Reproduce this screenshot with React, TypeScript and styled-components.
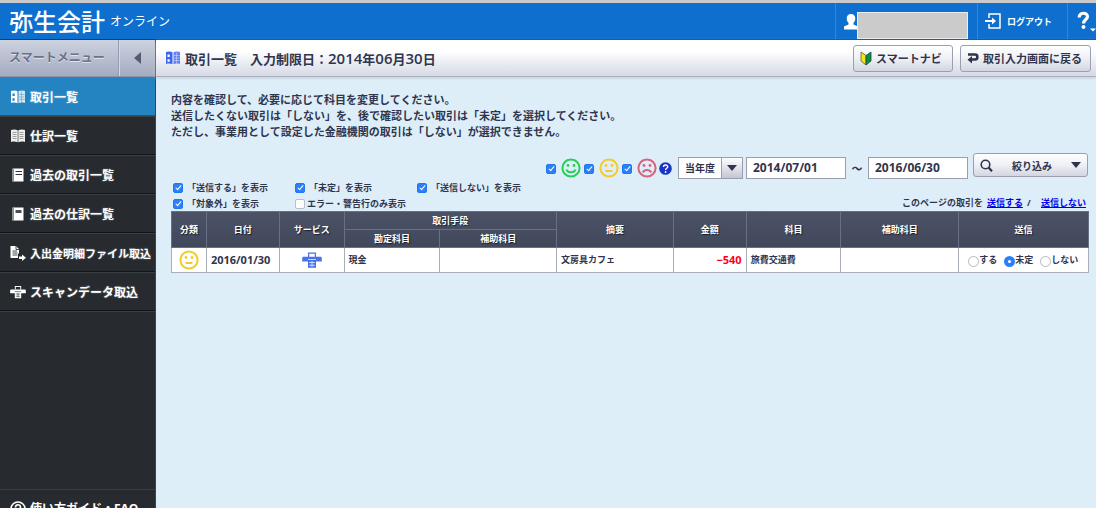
import React from "react";
import styled, { createGlobalStyle, css } from "styled-components";

const GlobalStyle = createGlobalStyle`
  *, *::before, *::after { box-sizing: border-box; }
  body {
    margin: 0;
    background: #deeef9;
    color: #30354d;
    font-family: "Open Sans", "Noto Sans CJK JP", sans-serif;
    font-weight: 700;
    font-size: 11px;
  }
  button, input, select { font: inherit; color: inherit; margin: 0; }
  a { color: inherit; }
`;

const Page = styled.div`
  display: flex;
  flex-direction: column;
  height: 100vh;
  overflow: hidden;
`;

const TopBar = styled.header`
  display: flex;
  justify-content: space-between;
  flex: none;
  height: 40px;
  border-top: 3px solid #cacaca;
  border-bottom: 1px solid #07457f;
  background: #0e6fce;
  color: #fff;
`;

const Logo = styled.a`
  display: flex;
  align-items: center;
  gap: 5px;
  padding-left: 9px;
  font-family: "Noto Sans CJK JP", sans-serif;
  font-size: 24px;
  font-weight: 500;
  line-height: 36px;
  text-decoration: none;
`;

const LogoSub = styled.span`
  font-size: 12px;
  font-weight: 400;
`;

const TopActions = styled.nav`
  display: flex;
`;

const TopCell = styled.div`
  display: flex;
  align-items: center;
  border-left: 1px solid #2f87da;
  padding-left: 8px;
`;

const UserCell = styled(TopCell)`
  width: 142px;
  align-items: flex-end;
`;

const UserName = styled.div`
  width: 111px;
  height: 27px;
  border: 1px solid #e8eef4;
  background: #cbcbcb;
`;

const UserIcon = styled.svg`
  width: 14px;
  height: 18px;
  margin-bottom: 8px;
  margin-right: -1px;
`;

const TopButton = styled.button`
  display: flex;
  align-items: center;
  gap: 6px;
  padding: 0;
  border: 0;
  background: none;
  font-size: 9px;
`;

const LogoutCell = styled(TopCell)`
  width: 90px;
  padding-left: 7px;
`;

const HelpCell = styled(TopCell)`
  width: 29px;
`;

const Body = styled.div`
  display: flex;
  flex: 1;
  min-height: 0;
`;

const Sidebar = styled.aside`
  display: flex;
  flex-direction: column;
  flex: none;
  width: 156px;
  background: #272b2f;
  border-right: 1px solid #3e4347;
`;

const MenuHead = styled.div`
  display: flex;
  flex: none;
  height: 37px;
  background: linear-gradient(#cdd2df, #a5acc0);
  border-bottom: 1px solid #8e95a8;
  color: #6c7288;
  font-size: 12px;
  text-shadow: 0 1px 0 #dfe3ec;
`;

const MenuTitle = styled.div`
  flex: 1;
  padding-left: 9px;
  line-height: 36px;
`;

const Collapse = styled.button`
  display: flex;
  align-items: center;
  justify-content: center;
  width: 37px;
  padding: 0;
  border: 0;
  border-left: 1px solid #949bb0;
  box-shadow: inset 1px 0 0 #d5d9e4;
  background: none;
`;

const MenuItem = styled.a<{ $active?: boolean; $small?: boolean }>`
  display: flex;
  align-items: center;
  flex: none;
  gap: 4px;
  height: 39px;
  padding: 1px 0 0 10px;
  border-top: 1px solid #3a3f44;
  border-bottom: 1px solid #121518;
  color: #fff;
  font-size: ${(p) => (p.$small ? 11 : 12)}px;
  white-space: nowrap;
  text-decoration: none;
  text-shadow: 0 0 2px rgba(255, 255, 255, 0.4);
  ${(p) =>
    p.$active &&
    css`
      background: #2484c1;
      border-top-color: #2484c1;
      border-bottom-color: #0f5c92;
    `}
  svg { flex: none; width: 16px; height: 16px; }
`;

const MenuRule = styled.div`
  flex: 1;
  border-top: 1px solid #3a3f44;
`;

const MenuFoot = styled.a`
  display: flex;
  flex: none;
  gap: 4px;
  height: 19px;
  padding: 9px 0 0 10px;
  overflow: hidden;
  border-top: 1px solid #3a3f44;
  color: #fff;
  font-size: 12px;
  line-height: 20px;
  white-space: nowrap;
  text-decoration: none;
  svg { flex: none; width: 16px; height: 20px; }
`;

const Main = styled.main`
  flex: 1;
  min-width: 0;
`;

const TitleBar = styled.div`
  display: flex;
  align-items: center;
  height: 37px;
  padding: 0 5px 0 9px;
  background: linear-gradient(#fff 30%, #d6d9e6);
  border-bottom: 1px solid #a9afbd;
  box-shadow: 0 1px 3px #b9cbd6;
`;

const Title = styled.h1`
  flex: 1;
  margin: 0 0 0 4px;
  font-size: 13px;
  line-height: 20px;
  white-space: pre;
`;

const Digits = styled.span`
  font-size: 15px;
  font-weight: 600;
`;

const Button = styled.button<{ $w: number; $h: number }>`
  display: flex;
  align-items: center;
  gap: 4px;
  width: ${(p) => p.$w}px;
  height: ${(p) => p.$h}px;
  margin-left: 7px;
  padding: 0 6px;
  border: 1px solid #9ba0b0;
  border-radius: 3px;
  background: linear-gradient(#fff, #eef0f5 50%, #d3d6e1);
  white-space: nowrap;
`;

const Content = styled.div`
  padding: 15px 7px 0 15px;
`;

const Lead = styled.p`
  margin: 0;
  line-height: 16px;
`;

const FilterRow = styled.div`
  display: flex;
  justify-content: flex-end;
  height: 26px;
  margin-top: 13px;
  padding-right: 1px;
`;

const Fields = styled.div`
  display: flex;
  align-items: center;
  height: 22px;
  margin: 4px -2px 0 0;
`;

const Faces = styled.div`
  display: flex;
  align-items: center;
  margin-right: 6px;
`;

const FaceLabel = styled.label`
  display: flex;
  align-items: center;
  gap: 5px;
  width: 38px;
  &:last-of-type { width: 37px; }
`;

const Check = styled.input`
  appearance: none;
  flex: none;
  width: 10px;
  height: 10px;
  margin-top: 1px;
  border: 1px solid #b9bec6;
  border-radius: 2px;
  background: #fff;
  &:checked {
    border-color: #1f78f0;
    background: #2a80fb;
  }
  &:checked::after {
    content: "";
    display: block;
    width: 3px;
    height: 6px;
    margin: 0 0 0 3px;
    border: solid #fff;
    border-width: 0 1px 1px 0;
    transform: rotate(40deg);
  }
`;

const HelpButton = styled.button`
  display: flex;
  padding: 0;
  border: 0;
  background: none;
`;

const SelectBox = styled.div`
  display: grid;
  grid-template-columns: 1fr 21px;
  width: 65px;
  height: 22px;
  border: 1px solid #9a9fae;
  background: #fff;
  margin-right: 3px;
`;

const YearSelect = styled.select`
  grid-area: 1 / 1 / 2 / 3;
  appearance: none;
  padding: 0 0 0 6px;
  border: 0;
  background: none;
  font-size: 10px;
`;

const SelectArrow = styled.span`
  grid-area: 1 / 2 / 2 / 3;
  display: flex;
  align-items: center;
  justify-content: center;
  border-left: 1px solid #9a9fae;
  background: linear-gradient(#fdfdfe, #c3c7d3);
  pointer-events: none;
`;

const DateInput = styled.input`
  width: 100px;
  height: 22px;
  padding: 0 6px 2px;
  border: 1px solid #9a9fae;
  background: #fff;
  font-size: 12px;
`;

const Tilde = styled.span`
  width: 22px;
  text-align: center;
`;

const FilterText = styled.span`
  flex: 1;
  font-size: 10px;
  text-align: center;
`;

const Options = styled.div`
  display: flex;
  align-items: flex-end;
  justify-content: space-between;
  height: 32px;
  font-size: 9px;
`;

const OptionGrid = styled.div`
  display: grid;
  grid-template-columns: 122px 122px 122px;
  grid-auto-rows: 16px;
  padding-left: 2px;
`;

const OptionLabel = styled.label<{ $tight?: boolean }>`
  display: flex;
  align-items: center;
  gap: ${(p) => (p.$tight ? 2 : 4)}px;
  line-height: 15px;
  white-space: nowrap;
`;

const PageLinks = styled.div`
  display: flex;
  gap: 4px;
  padding-right: 3px;
  line-height: 16px;
  a { color: #0000ee; }
`;

const Table = styled.table`
  width: 100%;
  table-layout: fixed;
  border-collapse: collapse;
  border: 1px solid #a9aebb;
  font-size: 9px;
`;

const Th = styled.th`
  height: 18px;
  padding: 0;
  border: 1px solid #697086;
  line-height: 14px;
  text-align: center;
`;

const HeadGroup = styled.thead`
  background: linear-gradient(#4b5266, #41485c);
  color: #fff;
  text-shadow: 1px 1px 1px #1b1e28;
`;

const Td = styled.td<{ $align?: string; $num?: boolean; $red?: boolean }>`
  height: 25px;
  padding: 0 4px;
  border: 1px solid #a9aebb;
  background: #fff;
  text-align: ${(p) => p.$align || "left"};
  font-size: ${(p) => (p.$num ? 11 : 9)}px;
  line-height: 14px;
  white-space: nowrap;
  ${(p) => p.$red && "color: #ff0016;"}
  svg { display: block; margin: 0 auto; }
`;

const Radios = styled.div`
  display: flex;
  align-items: center;
  gap: 7px;
  padding-left: 5px;
  label { display: flex; align-items: center; }
`;

const Radio = styled.input`
  appearance: none;
  width: 11px;
  height: 11px;
  border: 1px solid #b4b8bf;
  border-radius: 50%;
  background: #fff;
  margin-top: 2px;
  &:checked { border: 4px solid #2a80fb; }
`;

const faceColors = { happy: "#27cf54", neutral: "#f3cb2c", sad: "#d4647f" };
const mouths = {
  happy: "M5.5 11.5c1.2 3.8 7.8 3.800 9 0",
  neutral: "M6.500 13h7",
  sad: "M5.800 14.500c1.500-3.200 6.900-3.200 8.400 0",
};
type Mood = keyof typeof mouths;

const Face = ({ mood }: { mood: Mood }) => (
  <svg width="20" height="20" viewBox="0 0 20 20" fill="none" stroke={faceColors[mood]} strokeWidth="2" aria-label={mood}>
    <circle cx="10" cy="10" r="8.600" />
    <path d={mouths[mood]} />
    <circle cx="7" cy="7.500" r="1.400" fill={faceColors[mood]} stroke="none" />
    <circle cx="13" cy="7.500" r="1.400" fill={faceColors[mood]} stroke="none" />
  </svg>
);

const ListIcon = ({ color = "#fff", line = "#2484c1" }) => (
  <svg width="16" height="16" viewBox="0 0 16 16">
    <path d="M1 2c2.300-.7 4.500-.7 6.700.2v12c-2.200-.8-4.400-.8-6.700-.2z" fill={color} />
    <path d="M2.500 4.500h2.200v2.500H2.500zM2.500 9.300h2.200v2.500H2.500z" fill={line} />
    <path d="M8.300 2.200c2.200-.9 4.400-.9 6.700-.2v12c-2.300-.6-4.500-.6-6.700.2z" fill={color} opacity=".8" />
    <path d="M8 2v12.500" stroke={line} strokeWidth=".6" />
    <path d="M9 5.500h5.500M9 8h5.500M9 10.500h5.500M11.500 2.500v11" stroke={line} strokeWidth=".4" />
  </svg>
);

const BookIcon = () => (
  <svg viewBox="0 0 16 16">
    <path d="M1 2c2.300-.7 4.500-.7 6.700.2v12C5.500 13.400 3.300 13.400 1 14zM8.300 2.200c2.200-.9 4.400-.9 6.700-.2v12c-2.300-.6-4.500-.6-6.700.2z" fill="#eee" />
    <path d="M2.500 4.500h4M2.500 6.500h4M2.500 8.500h4M2.500 10.500h4M9.500 4.500h4M9.500 6.500h4M9.500 8.500h4M9.500 10.500h4" stroke="#8a8a8a" strokeWidth=".8" />
  </svg>
);

const PastIcon = ({ filled }: { filled?: boolean }) => (
  <svg viewBox="0 0 16 16">
    <path d="M2.500 1.500h11v13h-11z" fill="#fff" />
    <path d="M3.500 1.500v13" stroke="#8b8f94" />
    {filled ? <path d="M5.500 4h6v3h-6z" fill="#4a4e53" /> : <path d="M5.500 4.500h6.500M5.500 7.500h6.500" stroke="#30343a" strokeWidth="1.200" />}
  </svg>
);

const FileIcon = () => (
  <svg viewBox="0 0 16 16">
    <path d="M.5 1h5.500l3 3v4.500H8V13H.5z" fill="#fff" />
    <path d="M6 1v3.500h3M2.500 6h4.500M2.500 8h5M2.500 10h5" stroke="#44484d" fill="none" />
    <path d="M9 11.500h3V9.500l4 3.200-4 3.200v-2H9z" fill="#fff" />
  </svg>
);

const ScanIcon = ({ color = "#fff", line = "#272b2f", w = 16 }) => (
  <svg width={w} height={w * 0.8} viewBox="0 0 20 16">
    <path d="M6 .5h8V5h-1.200V1.700H7.200V5H6z" fill={color} />
    <path d="M1 4.800h18l.8 1v3.700H.2V5.800z" fill={color} />
    <path d="M6 8h8v7.800H6z" fill={color} />
    <path d="M6 7.500h8" stroke={line} strokeWidth=".7" />
    <path d="M7.200 10.500h5.600M7.200 13.300h5.600M10 9v5.800" stroke={line} strokeWidth=".7" />
  </svg>
);

const Triangle = ({ w = 10, h = 6 }) => (
  <svg width={w} height={h} viewBox="0 0 10 6"><path d="M0 0h10L5 6z" fill="#2f344a" /></svg>
);

const options = [
  { label: "「送信する」を表示", on: true },
  { label: "「未定」を表示", on: true },
  { label: "「送信しない」を表示", on: true },
  { label: "「対象外」を表示", on: true },
  { label: "エラー・警告行のみ表示", on: false },
];

const columns = [35, 73, 65, 96, 117, 117, 73, 95, 118, 130];
const total = columns.reduce((a, b) => a + b, 0);

export default function App() {
  return (
    <Page>
      <GlobalStyle />
      <TopBar>
        <Logo href="#">弥生会計<LogoSub>オンライン</LogoSub></Logo>
        <TopActions>
          <UserCell>
            <UserIcon viewBox="0 0 14 18" fill="#fff">
              <path d="M7 1c2.600 0 4.300 1.700 4.300 4.300 0 2-.8 3.500-1.800 4.500v1.700L14 13.500V16.500H0v-3l4.500-2V9.800C3.500 8.800 2.700 7.300 2.700 5.300 2.700 2.700 4.400 1 7 1z" />
            </UserIcon>
            <UserName />
          </UserCell>
          <LogoutCell>
            <TopButton>
              <svg width="16" height="16" viewBox="0 0 16 16" fill="none" stroke="#fff" strokeWidth="1.500">
                <path d="M4 5V1h11v14H4v-4" />
                <path d="M0 8h8" strokeWidth="2" />
                <path d="M7 4.500 11 8l-4 3.500z" fill="#fff" stroke="none" />
              </svg>
              ログアウト
            </TopButton>
          </LogoutCell>
          <HelpCell>
            <TopButton aria-label="ヘルプ">
              <svg width="20" height="22" viewBox="0 0 20 22">
                <path d="M3.200 7.500c0-5.500 8.300-5.500 8.300-1C11.500 9.500 7.500 9.500 7.500 13.500" fill="none" stroke="#fff" strokeWidth="3.200" />
                <circle cx="7.500" cy="17" r="2" fill="#fff" />
                <path d="M14 18.500h6l-3 3z" fill="#fff" />
              </svg>
            </TopButton>
          </HelpCell>
        </TopActions>
      </TopBar>
      <Body>
        <Sidebar>
          <MenuHead>
            <MenuTitle>スマートメニュー</MenuTitle>
            <Collapse aria-label="メニューを閉じる">
              <svg width="7" height="12" viewBox="0 0 7 12"><path d="M7 0v12L0 6z" fill="#555b70" /></svg>
            </Collapse>
          </MenuHead>
          <MenuItem href="#" $active><ListIcon />取引一覧</MenuItem>
          <MenuItem href="#"><BookIcon />仕訳一覧</MenuItem>
          <MenuItem href="#"><PastIcon />過去の取引一覧</MenuItem>
          <MenuItem href="#"><PastIcon filled />過去の仕訳一覧</MenuItem>
          <MenuItem href="#" $small><FileIcon />入出金明細ファイル取込</MenuItem>
          <MenuItem href="#"><ScanIcon />スキャンデータ取込</MenuItem>
          <MenuRule />
          <MenuFoot href="#">
            <svg viewBox="0 0 16 20" fill="none" stroke="#fff" strokeWidth="1.600">
              <circle cx="8" cy="10" r="7" />
              <path d="M5.500 8.500c0-3.500 5-3.500 5-.5 0 2-2.500 2-2.500 4" />
            </svg>
            使い方ガイド・FAQ
          </MenuFoot>
        </Sidebar>
        <Main>
          <TitleBar>
            <ListIcon color="#3d66ee" line="#fff" />
            <Title>
              取引一覧　入力制限日：<Digits>2014</Digits>年<Digits>06</Digits>月<Digits>30</Digits>日
            </Title>
            <Button $w={100} $h={27}>
              <svg width="12" height="15" viewBox="0 0 12 15">
                <path d="M1 1l5 3.500V14L1 10z" fill="#f7e51c" stroke="#5c6420" strokeWidth=".8" />
                <path d="M11 1L6 4.500V14l5-4z" fill="#0e8a4d" stroke="#1c4a3a" strokeWidth=".8" />
              </svg>
              スマートナビ
            </Button>
            <Button $w={131} $h={27}>
              <svg width="12" height="12" viewBox="0 0 12 12">
                <path d="M1 2.500h7q2.300 0 2.300 2v1q0 2-2.300 2H4" fill="none" stroke="#2f344a" strokeWidth="2.600" />
                <path d="M5 4v7.500L.5 7.700z" fill="#2f344a" />
              </svg>
              取引入力画面に戻る
            </Button>
          </TitleBar>
          <Content>
            <Lead>
              内容を確認して、必要に応じて科目を変更してください。<br />
              送信したくない取引は「しない」を、後で確認したい取引は「未定」を選択してください。<br />
              ただし、事業用として設定した金融機関の取引は「しない」が選択できません。
            </Lead>
            <FilterRow>
              <Fields>
                <Faces>
                  {(["happy", "neutral", "sad"] as Mood[]).map((m) => (
                    <FaceLabel key={m}><Check type="checkbox" defaultChecked /><Face mood={m} /></FaceLabel>
                  ))}
                  <HelpButton aria-label="説明">
                    <svg width="13" height="13" viewBox="0 0 13 13">
                      <circle cx="6.500" cy="6.500" r="6.300" fill="#1a35c4" />
                      <path d="M4.500 5c0-2.600 4.200-2.600 4.200-.2 0 1.500-2.100 1.500-2.100 3.200" fill="none" stroke="#fff" strokeWidth="1.400" />
                      <circle cx="6.600" cy="10" r=".9" fill="#fff" />
                    </svg>
                  </HelpButton>
                </Faces>
                <SelectBox>
                  <YearSelect aria-label="年度"><option>当年度</option></YearSelect>
                  <SelectArrow><Triangle /></SelectArrow>
                </SelectBox>
                <DateInput aria-label="開始日" defaultValue="2014/07/01" />
                <Tilde>～</Tilde>
                <DateInput aria-label="終了日" defaultValue="2016/06/30" />
              </Fields>
              <Button $w={115} $h={24}>
                <svg width="13" height="13" viewBox="0 0 13 13" fill="none" stroke="#2f344a">
                  <circle cx="5.500" cy="5.500" r="4.300" strokeWidth="1.600" />
                  <path d="M8.500 8.500l3.500 3.800" strokeWidth="2.200" />
                </svg>
                <FilterText>絞り込み</FilterText>
                <Triangle />
              </Button>
            </FilterRow>
            <Options>
              <OptionGrid>
                {options.map((o) => (
                  <OptionLabel key={o.label} $tight={!o.on}>
                    <Check type="checkbox" defaultChecked={o.on} />{o.label}
                  </OptionLabel>
                ))}
              </OptionGrid>
              <PageLinks>
                <span>このページの取引を</span><a href="#">送信する</a><span>/</span>&nbsp;<a href="#">送信しない</a>
              </PageLinks>
            </Options>
            <Table>
              <colgroup>
                {columns.map((w, i) => <col key={i} style={{ width: `${(w / total) * 100}%` }} />)}
              </colgroup>
              <HeadGroup>
                <tr>
                  <Th rowSpan={2}>分類</Th>
                  <Th rowSpan={2}>日付</Th>
                  <Th rowSpan={2}>サービス</Th>
                  <Th colSpan={2}>取引手段</Th>
                  <Th rowSpan={2}>摘要</Th>
                  <Th rowSpan={2}>金額</Th>
                  <Th rowSpan={2}>科目</Th>
                  <Th rowSpan={2}>補助科目</Th>
                  <Th rowSpan={2}>送信</Th>
                </tr>
                <tr>
                  <Th>勘定科目</Th>
                  <Th>補助科目</Th>
                </tr>
              </HeadGroup>
              <tbody>
                <tr>
                  <Td><Face mood="neutral" /></Td>
                  <Td $num>2016/01/30</Td>
                  <Td><ScanIcon color="#4a74ee" line="#fff" w={20} /></Td>
                  <Td>現金</Td>
                  <Td />
                  <Td>文房具カフェ</Td>
                  <Td $num $red $align="right">−540</Td>
                  <Td>旅費交通費</Td>
                  <Td />
                  <Td>
                    <Radios>
                      <label><Radio type="radio" name="send" />する</label>
                      <label><Radio type="radio" name="send" defaultChecked />未定</label>
                      <label><Radio type="radio" name="send" />しない</label>
                    </Radios>
                  </Td>
                </tr>
              </tbody>
            </Table>
          </Content>
        </Main>
      </Body>
    </Page>
  );
}
